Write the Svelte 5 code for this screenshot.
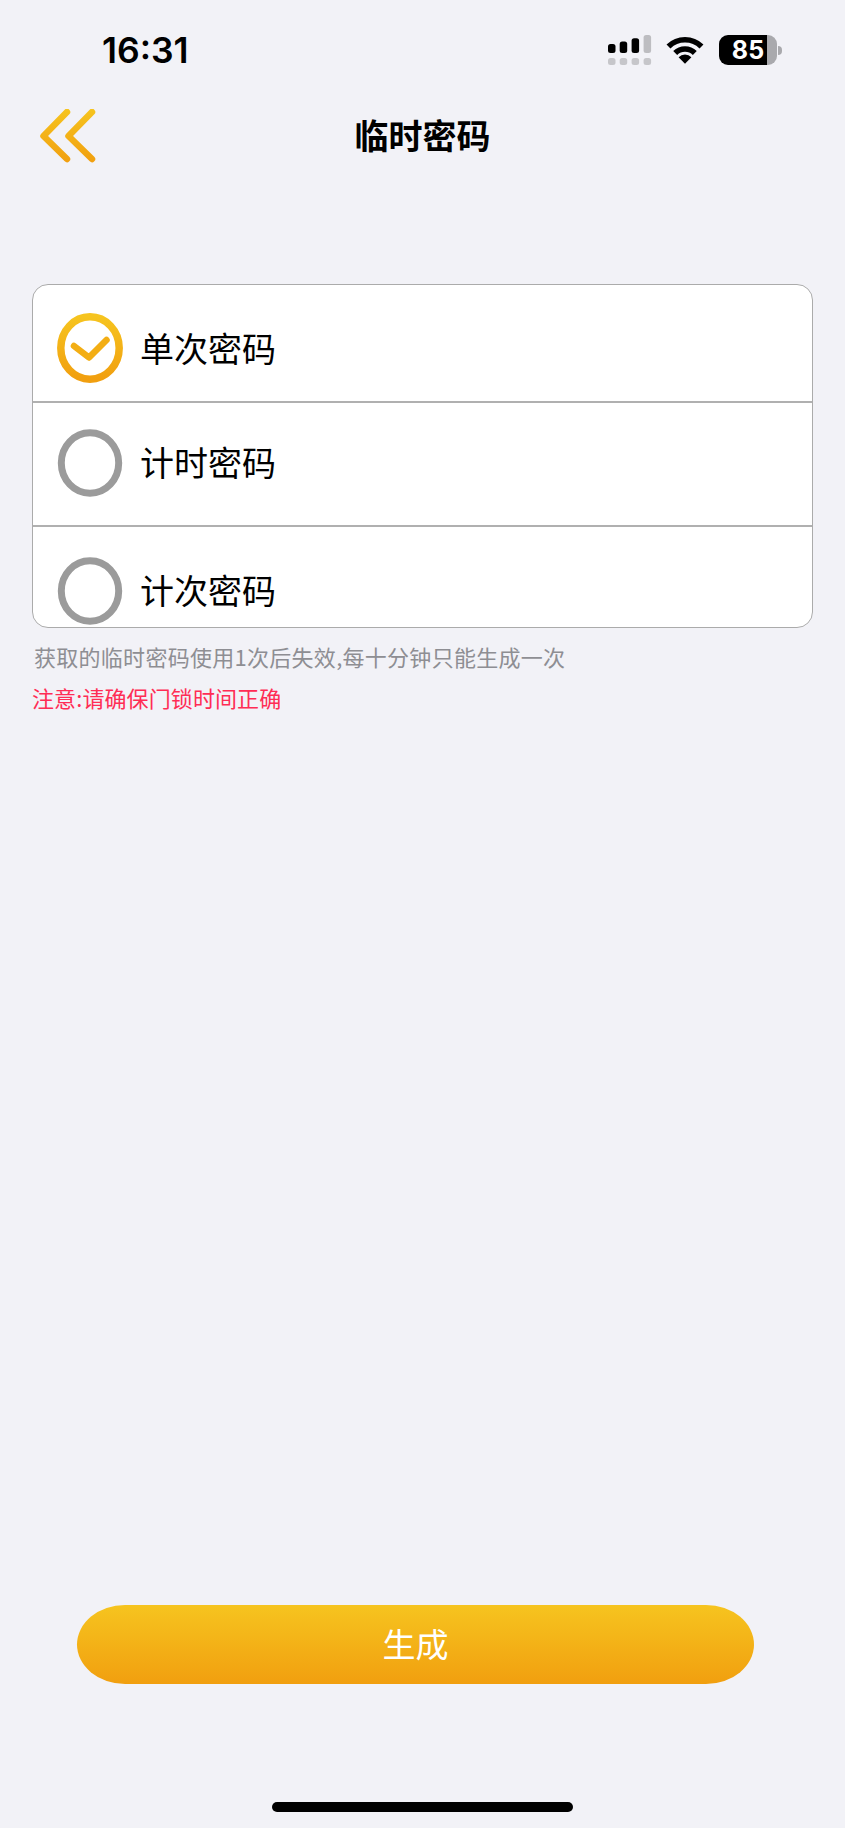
<script>
  const options = ['单次密码', '计时密码', '计次密码'];
  let selected = $state(0);
</script>

<svelte:head>
  <title>临时密码</title>
</svelte:head>

<div class="page">
  <header class="status">
    <span class="time">16:31</span>
    <div class="status-icons">
      <svg class="signal" width="44" height="31" viewBox="0 0 44 31">
        <rect x="0" y="9" width="7.5" height="9" rx="2.5" fill="#000" />
        <rect x="11.7" y="6.6" width="7.5" height="11.4" rx="2.5" fill="#000" />
        <rect x="23.6" y="3.2" width="7.5" height="14.8" rx="2.5" fill="#000" />
        <rect x="35.6" y="0" width="7.5" height="18" rx="2.5" fill="#bdbdc1" />
        <rect x="0" y="23" width="7.5" height="7" rx="2.5" fill="#c6c6ca" />
        <rect x="11.7" y="23" width="7.5" height="7" rx="2.5" fill="#c6c6ca" />
        <rect x="23.6" y="23" width="7.5" height="7" rx="2.5" fill="#c6c6ca" />
        <rect x="35.6" y="23" width="7.5" height="7" rx="2.5" fill="#c6c6ca" />
      </svg>
      <svg class="wifi" width="38" height="28" viewBox="0 0 38 28">
        <path d="M2.5 10.5a23.5 23.5 0 0 1 33 0" fill="none" stroke="#000" stroke-width="5.6" />
        <path d="M9.2 17a14 14 0 0 1 19.6 0" fill="none" stroke="#000" stroke-width="5.6" />
        <path d="M12.6 21.2a9 9 0 0 1 12.8 0L19 27.8z" fill="#000" />
      </svg>
      <div class="battery">
        <div class="battery-body"><span>85</span></div>
        <div class="battery-nub"></div>
      </div>
    </div>
  </header>

  <nav class="nav">
    <svg class="back" width="56" height="54" viewBox="0 0 56 54">
      <defs>
        <linearGradient id="backFill" gradientUnits="userSpaceOnUse" x1="0" y1="0" x2="0" y2="54">
          <stop offset="0" stop-color="#f6c41f" />
          <stop offset="1" stop-color="#f19f0f" />
        </linearGradient>
      </defs>
      <path d="M27 3 3.5 27 27 50M52 3 28.5 27 52 50" fill="none" stroke="url(#backFill)" stroke-width="6.5" stroke-linecap="round" stroke-linejoin="round" />
    </svg>
    <h1>临时密码</h1>
  </nav>

  <main class="content">
    <ul class="options">
      {#each options as label, i}
        <li class="option" class:first={i === 0} class:last={i === options.length - 1}>
          {#if i === selected}
            <svg class="radio" width="66" height="70" viewBox="0 0 66 70">
              <defs>
                <linearGradient id="radioFill" x1="0" y1="0" x2="0" y2="1">
                  <stop offset="0" stop-color="#f6c41f" />
                  <stop offset="1" stop-color="#f19f0f" />
                </linearGradient>
              </defs>
              <ellipse cx="33" cy="35" rx="29.2" ry="31.2" fill="none" stroke="url(#radioFill)" stroke-width="7.5" />
              <path d="M17 33 32 44.5 49.5 27" fill="none" stroke="#f3ae14" stroke-width="6.5" stroke-linecap="round" stroke-linejoin="round" />
            </svg>
          {:else}
            <svg class="radio" width="66" height="70" viewBox="0 0 66 70">
              <ellipse cx="33" cy="35" rx="28.7" ry="30.2" fill="none" stroke="#9b9b9b" stroke-width="7" />
            </svg>
          {/if}
          <span class="label">{label}</span>
        </li>
      {/each}
    </ul>
    <p class="hint">获取的临时密码使用1次后失效,每十分钟只能生成一次</p>
    <p class="warn">注意:请确保门锁时间正确</p>
  </main>

  <button class="generate">生成</button>
  <div class="home"></div>
</div>

<style>
  :global(body) {
    margin: 0;
    background: #f2f2f7;
  }

  .page {
    display: flex;
    flex-direction: column;
    height: 1828px;
    background: #f2f2f7;
    font-family: "Noto Sans CJK SC", "Noto Sans", sans-serif;
    color: #000;
    overflow: hidden;
  }

  .status {
    display: flex;
    align-items: center;
    justify-content: space-between;
    height: 100px;
    padding: 0 63px 0 102px;
    box-sizing: border-box;
  }

  .time {
    font-family: Inter, sans-serif;
    font-size: 35.5px;
    font-weight: 600;
  }

  .status-icons {
    display: flex;
    align-items: center;
  }

  .signal {
    margin-right: 14px;
  }

  .wifi {
    margin-right: 15px;
    margin-top: -1px;
  }

  .battery {
    display: flex;
    align-items: center;
  }

  .battery-body {
    display: flex;
    align-items: center;
    justify-content: center;
    box-sizing: border-box;
    width: 58px;
    height: 30px;
    border-radius: 9px;
    background: linear-gradient(90deg, #000 82%, #a9a9ad 82%);
    color: #fff;
    font-family: Inter, sans-serif;
    font-size: 25px;
    font-weight: 700;
  }

  .battery-nub {
    width: 4px;
    height: 9px;
    margin-left: 1px;
    border-radius: 0 4px 4px 0;
    background: #a9a9ad;
  }

  .nav {
    position: relative;
    display: flex;
    align-items: center;
    justify-content: center;
    height: 72px;
  }

  .back {
    position: absolute;
    left: 40px;
    top: 9px;
  }

  h1 {
    margin: 0 0 2px;
    font-size: 34px;
    font-weight: 700;
    line-height: 68px;
  }

  .content {
    flex: 1;
    padding: 112px 32px 0;
  }

  .options {
    box-sizing: border-box;
    height: 344px;
    margin: 0;
    padding: 0;
    list-style: none;
    background: #fff;
    border: 1.5px solid #ababab;
    border-radius: 16px;
    overflow: hidden;
  }

  .option {
    display: flex;
    align-items: center;
    gap: 17px;
    box-sizing: border-box;
    height: 124px;
    padding-left: 24px;
    padding-bottom: 2px;
    border-bottom: 2px solid #b0b0b0;
    font-size: 34px;
    line-height: 40px;
  }

  .label {
    padding-bottom: 2px;
  }

  .option.first {
    height: 118px;
    padding-top: 10px;
    padding-bottom: 0;
  }

  .option.first .label {
    padding-bottom: 0;
  }

  .option.last {
    height: 125px;
    padding-top: 2px;
    padding-bottom: 0;
    border-bottom: none;
  }

  .radio {
    flex: none;
  }

  .hint,
  .warn {
    margin: 0;
    font-size: 22px;
    line-height: 32px;
  }

  .hint {
    margin: 12px 0 0 2px;
    color: #8e8e93;
    letter-spacing: 0.28px;
  }

  .warn {
    margin-top: 9px;
    color: #ff2d55;
    letter-spacing: 0.1px;
  }

  .generate {
    display: block;
    flex: none;
    width: 677px;
    height: 79px;
    margin: 0 0 0 77px;
    padding: 0 0 2px;
    border: none;
    border-radius: 48px / 39.5px;
    background: linear-gradient(180deg, #f6c41f, #f19f0f);
    color: #fff;
    font-family: inherit;
    font-size: 33px;
    line-height: 77px;
  }

  .home {
    flex: none;
    width: 301px;
    height: 10px;
    margin: 118px 0 16px 272px;
    border-radius: 5px;
    background: #000;
  }
</style>
